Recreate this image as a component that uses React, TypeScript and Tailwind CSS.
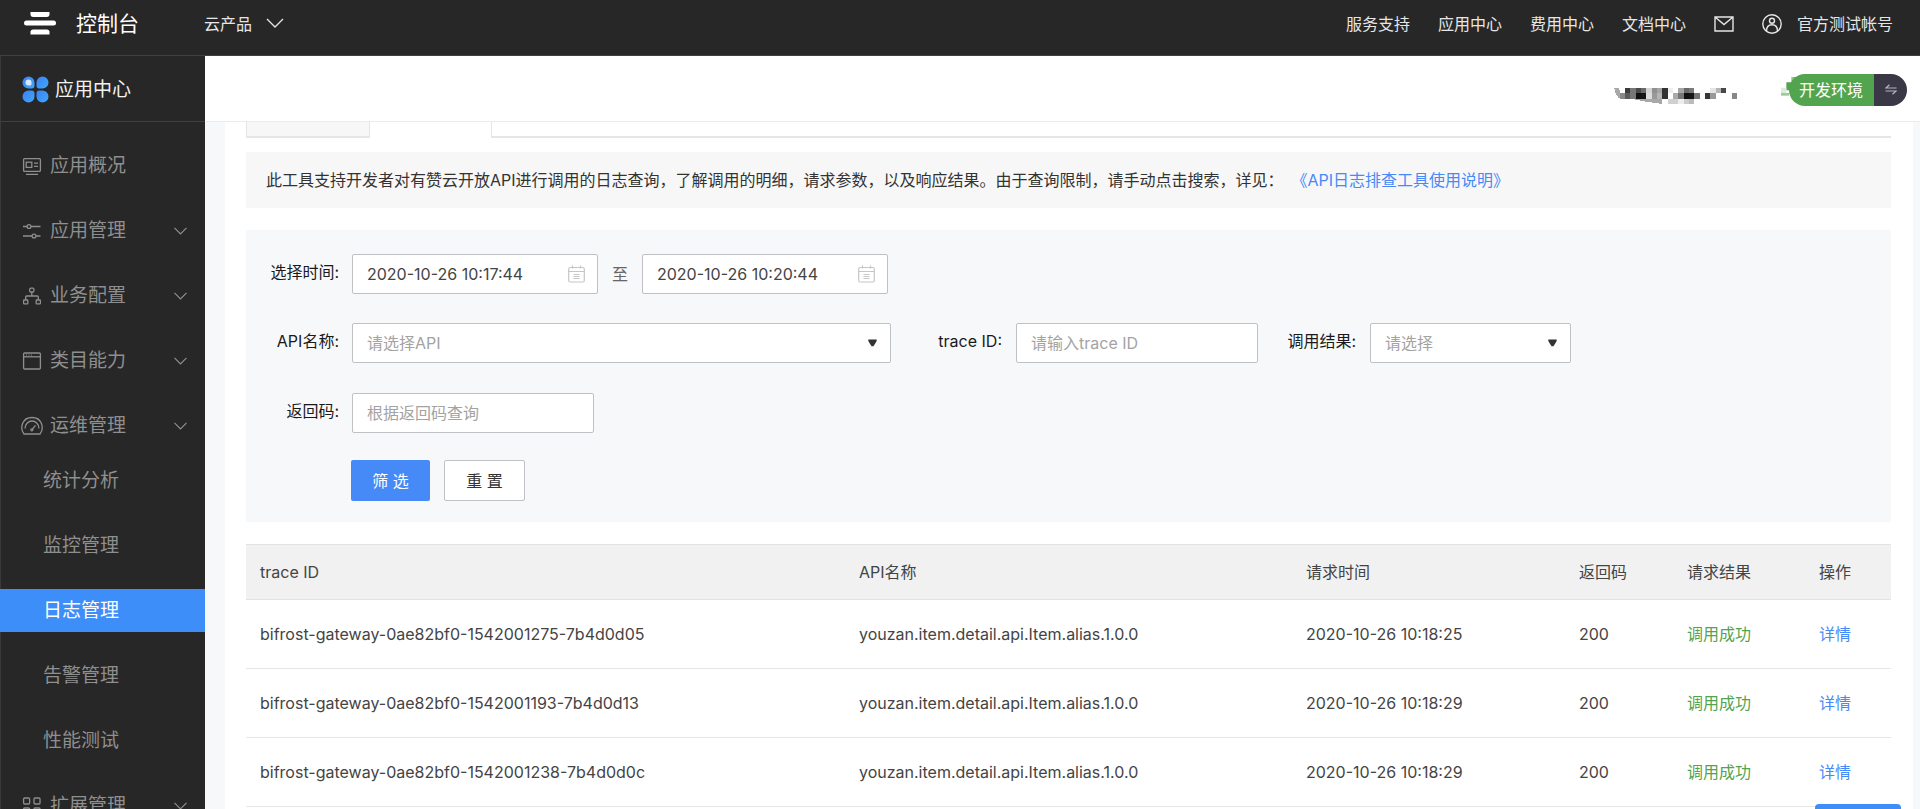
import type { ReactNode } from "react";

function Icon({ children }: { children: ReactNode }) {
  return (
    <svg width="22" height="20" viewBox="0 0 22 20" fill="none" stroke="currentColor" strokeWidth="1.3" aria-hidden="true">
      {children}
    </svg>
  );
}

const overviewIcon = (
  <Icon>
    <rect x="2.6" y="2.6" width="16.8" height="12.8" rx="1" />
    <rect x="5.2" y="6.2" width="5.6" height="5.2" />
    <path d="M13 7.2h4M13 10.4h4M5 18.4h12" />
  </Icon>
);
const slidersIcon = (
  <Icon>
    <path d="M2 5.5h4M10 5.5h9.5M2 15h9M15 15h4.5" />
    <circle cx="8" cy="5.5" r="1.9" />
    <circle cx="13" cy="15" r="1.9" />
  </Icon>
);
const treeIcon = (
  <Icon>
    <rect x="8.7" y="2.2" width="4.2" height="3.8" rx="1" />
    <rect x="2.6" y="14" width="4.2" height="3.8" rx="0.6" />
    <rect x="15.2" y="14" width="4.2" height="3.8" rx="0.6" />
    <path d="M10.8 6v4M4.7 14v-3q0-1 1-1h10.6q1 0 1 1v3" />
  </Icon>
);
const windowIcon = (
  <Icon>
    <rect x="2.6" y="2" width="16.8" height="16" rx="1" />
    <path d="M2.6 5.8h16.8" />
    <path d="M5 4h1M7.5 4h1M10 4h1" strokeWidth="1" />
  </Icon>
);
const gaugeIcon = (
  <Icon>
    <path d="M3 18C-1.5 12 1 1.5 11 1.5S23.5 12 19 18z" strokeLinejoin="round" />
    <path d="M4 12.5a7 7.5 0 0 1 14 0" />
    <circle cx="10.8" cy="13.8" r="1" />
    <path d="M11.5 13l3-3.6" />
  </Icon>
);
const gridIcon = (
  <Icon>
    <rect x="2.6" y="2" width="6" height="6" rx="1" />
    <rect x="13" y="2" width="6" height="6" rx="1" />
    <rect x="2.6" y="12" width="6" height="6" rx="1" />
    <rect x="13" y="12" width="6" height="6" rx="1" />
  </Icon>
);

type MenuEntry = { label: string; icon: ReactNode; expandable: boolean; children?: string[] };

const menu: MenuEntry[] = [
  { label: "应用概况", icon: overviewIcon, expandable: false },
  { label: "应用管理", icon: slidersIcon, expandable: true },
  { label: "业务配置", icon: treeIcon, expandable: true },
  { label: "类目能力", icon: windowIcon, expandable: true },
  {
    label: "运维管理",
    icon: gaugeIcon,
    expandable: true,
    children: ["统计分析", "监控管理", "日志管理", "告警管理", "性能测试"],
  },
  { label: "扩展管理", icon: gridIcon, expandable: true },
];

const activeChild = "日志管理";

const logs = [
  { trace: "bifrost-gateway-0ae82bf0-1542001275-7b4d0d05", time: "2020-10-26 10:18:25" },
  { trace: "bifrost-gateway-0ae82bf0-1542001193-7b4d0d13", time: "2020-10-26 10:18:29" },
  { trace: "bifrost-gateway-0ae82bf0-1542001238-7b4d0d0c", time: "2020-10-26 10:18:29" },
];

function TopBar() {
  return (
    <header className="flex h-14 shrink-0 items-center border-b border-[#404040] bg-[#272727] pr-[27px] pb-2 pl-6 text-base text-[#e6e6e6]">
      <svg width="32" height="23" viewBox="0 0 32 23" fill="#fff" aria-hidden="true">
        <path d="M6.5 0h19v3q-.6 2-2.5 2H9Q7 5 6.5 3z" />
        <rect y="8.5" width="32" height="5" rx="2.5" />
        <path d="M6.5 22.5h19v-3q-.6-2-2.5-2H9q-2 0-2.5 2z" />
      </svg>
      <span className="ml-5 text-[21px] text-white">控制台</span>
      <button type="button" className="ml-[65px] flex items-center gap-[14px]">
        云产品
        <svg width="18" height="11" viewBox="0 0 18 11" fill="none" stroke="currentColor" strokeWidth="1.3" aria-hidden="true">
          <path d="M1 1l8 8 8-8" />
        </svg>
      </button>
      <nav className="ml-auto flex items-center gap-7">
        <a href="#support">服务支持</a>
        <a href="#apps">应用中心</a>
        <a href="#billing">费用中心</a>
        <a href="#docs">文档中心</a>
        <a href="#messages" aria-label="消息">
          <svg width="20" height="16" viewBox="0 0 20 16" fill="none" stroke="currentColor" strokeWidth="1.4" aria-hidden="true">
            <path d="M1 1h18v14H1zM1 1l9 7.5L19 1" />
          </svg>
        </a>
        <a href="#account" className="flex items-center gap-[15px]">
          <svg width="20" height="20" viewBox="0 0 20 20" fill="none" stroke="currentColor" strokeWidth="1.4" aria-hidden="true">
            <circle cx="10" cy="10" r="9.2" />
            <circle cx="10" cy="6.7" r="2.5" />
            <path d="M4.5 17c0-4 2-6.3 5.5-6.3s5.5 2.3 5.5 6.3" />
          </svg>
          官方测试帐号
        </a>
      </nav>
    </header>
  );
}

function Sidebar() {
  return (
    <aside className="w-[205px] shrink-0 border-l border-[#3a3a3a] bg-[#272727] text-[19px] leading-7 text-[#8f8f8f]">
      <div className="flex h-[66px] items-center gap-[6px] border-b border-[#404040] pt-[2px] pl-[21px] text-[#f2f2f2]">
        <svg width="27" height="27" viewBox="0 0 27 27" aria-hidden="true">
          <defs>
            <linearGradient id="petal" x1="0" y1="0" x2="1" y2="1">
              <stop offset="0" stopColor="#3d7ff5" />
              <stop offset="1" stopColor="#3fa9f8" />
            </linearGradient>
          </defs>
          <g fill="url(#petal)">
            <path d="M6.5 0.5a6 6 0 0 1 6 6v3q0 3-3 3h-3a6 6 0 0 1 0-12z" />
            <path d="M20.5 0.5a6 6 0 0 1 0 12h-3.5q-2.5 0-2.5-3v-3a6 6 0 0 1 6-6z" />
            <path d="M6.5 26.5a6 6 0 0 1 0-12h3q3 0 3 3v3a6 6 0 0 1-6 6z" />
            <path d="M20.5 26.5a6 6 0 0 1-6-6v-3q0-3 2.5-3h3.5a6 6 0 0 1 0 12z" />
          </g>
          <path d="M6.5 3.5a3 3 0 0 1 3 3v1.5q0 1.5-1.5 1.5H6.5a3 3 0 0 1 0-6z" fill="#d6e8ff" />
        </svg>
        应用中心
      </div>
      <ul className="flex flex-col gap-[22px] pt-[22px]">
        {menu.map((item) => (
          <li key={item.label}>
            <a href="#menu" className="flex h-[43px] items-center gap-[7px] pr-[18px] pl-5">
              {item.icon}
              <span>{item.label}</span>
              {item.expandable && (
                <svg className="ml-auto" width="13" height="8" viewBox="0 0 13 8" fill="none" stroke="currentColor" strokeWidth="1.2" aria-hidden="true">
                  <path d="M0.5 0.8l6 6 6-6" />
                </svg>
              )}
            </a>
            {item.children && (
              <ul className="mt-3 flex flex-col gap-[22px]">
                {item.children.map((child) => (
                  <li key={child}>
                    <a
                      href="#submenu"
                      className={
                        child === activeChild
                          ? "-ml-px flex h-[43px] items-center bg-[#3d8ef9] pl-[43px] text-white"
                          : "flex h-[43px] items-center pl-[42px]"
                      }
                    >
                      {child}
                    </a>
                  </li>
                ))}
              </ul>
            )}
          </li>
        ))}
      </ul>
    </aside>
  );
}

/* Colour of each mosaic tile as [column, row, fill]. */
const tiles: [number, number, string][] = [
  [2, 0, "#3a3a3a"], [3, 0, "#777"], [4, 0, "#4a4a4a"], [5, 0, "#6a6a6a"], [6, 0, "#d5d5d5"], [7, 0, "#909090"],
  [8, 0, "#a5a5a5"], [9, 0, "#333"], [10, 0, "#eee"], [12, 0, "#a5a5a5"], [13, 0, "#6a6a6a"], [14, 0, "#7a7a7a"],
  [18, 0, "#e4e4e4"], [19, 0, "#b5b5b5"], [20, 0, "#484848"],
  [1, 1, "#888"], [2, 1, "#5a5a5a"], [3, 1, "#777"], [4, 1, "#111"], [5, 1, "#151515"], [6, 1, "#ddd"], [7, 1, "#999"],
  [8, 1, "#b5b5b5"], [9, 1, "#333"], [11, 1, "#aaa"], [12, 1, "#777"], [13, 1, "#111"], [14, 1, "#161616"],
  [15, 1, "#777"], [17, 1, "#383838"], [18, 1, "#999"], [22, 1, "#888"],
  [10, 2, "#d0d0d0"], [11, 2, "#d0d0d0"], [12, 2, "#eee"], [13, 2, "#ccc"], [14, 2, "#bbb"],
];

function PageHeader() {
  return (
    <div className="flex h-[66px] shrink-0 items-center justify-end border-b border-[#ebebeb] bg-white pt-[2px] pr-[13px]">
      <svg width="123" height="16" viewBox="0 0 368 48" className="mt-3" shapeRendering="crispEdges" aria-hidden="true">
        <path d="M0 0h14l5 18v14q-14-4-19-32z" fill="#a8a8a8" />
        <path d="M48 32h96v16L96 41z" fill="#a8a8a8" />
        {tiles.map(([col, row, fill]) => (
          <rect key={`${col}-${row}`} x={col * 16} y={row * 16} width="16" height="16" fill={fill} />
        ))}
      </svg>
      <div className="relative ml-[52px] flex h-8 text-base">
        <svg className="absolute top-[3px] -left-[8px]" width="16" height="20" viewBox="0 0 48 60" aria-hidden="true">
          <path d="M32 0h14v40H16V16h16z" fill="#52a44e" />
          <path d="M32 0h8v14h-8z" fill="#8cc388" />
          <path d="M0 32h16v16H0z" fill="#dbeeda" />
          <path d="M0 48h24v8H0z" fill="#9ccb99" />
        </svg>
        <span className="relative flex items-center rounded-l-full bg-[#52a44e] pr-[11px] pl-[10px] text-white">开发环境</span>
        <button type="button" aria-label="切换环境" className="flex w-[33px] items-center justify-center rounded-r-full bg-[#3a3846] text-[#b5b4bc]">
          <svg width="12" height="11" viewBox="0 0 12 11" fill="none" stroke="currentColor" strokeWidth="1.2" aria-hidden="true">
            <path d="M4.5 0.8L1 4h10.5M7.5 10.2L11 7H0.5" />
          </svg>
        </button>
      </div>
    </div>
  );
}

function DateField({ id, label, value }: { id: string; label: string; value: string }) {
  return (
    <div className="flex h-10 w-[246px] items-center rounded-xs border border-[#c0c1c4] bg-white pr-3 pl-[14px]">
      <input id={id} aria-label={label} defaultValue={value} className="min-w-0 flex-1 bg-transparent text-[#444] outline-none" />
      <svg width="17" height="18" viewBox="0 0 17 18" fill="none" stroke="#c6c6c6" strokeWidth="1.2" aria-hidden="true">
        <rect x="0.7" y="2.5" width="15.6" height="14.5" rx="1.5" />
        <path d="M0.7 6.5h15.6M4.5 0.5v3M12.5 0.5v3M5.5 9.5h6M5.5 11.5h6M5.5 13.5h6" />
      </svg>
    </div>
  );
}

function SelectField({ id, placeholder, width }: { id: string; placeholder: string; width: string }) {
  return (
    <div className={`relative ${width}`}>
      <select id={id} className="h-10 w-full appearance-none rounded-xs border border-[#c0c1c4] bg-white pr-10 pl-[14px] text-[#a3a3a3] outline-none">
        <option>{placeholder}</option>
      </select>
      <svg className="pointer-events-none absolute top-4 right-[14px]" width="9" height="8" viewBox="0 0 9 8" fill="#333" aria-hidden="true">
        <path d="M0.3 0.5h8.4v1.5L5.5 7.3h-2L0.3 2z" />
      </svg>
    </div>
  );
}

const textInput =
  "h-10 w-[242px] rounded-xs border border-[#c0c1c4] bg-white px-[14px] text-[#444] outline-none placeholder:text-[#a3a3a3]";
const fieldLabel = "w-[93px] pb-1 text-right text-[#1a1a1a]";
const inlineLabel = "pb-1 text-right text-[#1a1a1a]";

function Filters() {
  return (
    <form className="mt-[22px] flex flex-col bg-[#f7f8fa] pt-6 pb-[21px]">
      <div className="flex items-center">
        <label htmlFor="start" className={fieldLabel}>选择时间:</label>
        <div className="ml-[13px] flex items-center">
          <DateField id="start" label="开始时间" value="2020-10-26 10:17:44" />
          <span className="w-11 text-center text-[#666]">至</span>
          <DateField id="end" label="结束时间" value="2020-10-26 10:20:44" />
        </div>
      </div>
      <div className="mt-[29px] flex items-center">
        <label htmlFor="api" className={fieldLabel}>API名称:</label>
        <div className="ml-[13px] flex items-center">
          <SelectField id="api" placeholder="请选择API" width="w-[539px]" />
          <label htmlFor="trace" className={`w-[111px] ${inlineLabel}`}>trace ID:</label>
          <input id="trace" placeholder="请输入trace ID" className={`ml-[14px] ${textInput}`} />
          <label htmlFor="result" className={`w-[98px] ${inlineLabel}`}>调用结果:</label>
          <div className="ml-[14px]">
            <SelectField id="result" placeholder="请选择" width="w-[201px]" />
          </div>
        </div>
      </div>
      <div className="mt-[30px] flex items-center">
        <label htmlFor="code" className={fieldLabel}>返回码:</label>
        <input id="code" placeholder="根据返回码查询" className={`ml-[13px] ${textInput}`} />
      </div>
      <div className="mt-[27px] ml-[105px] flex gap-[14px]">
        <button type="button" className="h-[41px] w-[79px] rounded-xs bg-[#468af7] text-white">筛 选</button>
        <button type="button" className="h-[41px] w-[81px] rounded-xs border border-[#c0c1c4] bg-white text-[#333]">重 置</button>
      </div>
    </form>
  );
}

function LogTable() {
  return (
    <table className="mt-[22px] w-full table-fixed border-collapse text-left text-[#444]">
      <thead>
        <tr className="h-[55px] border-y border-[#e2e2e2] bg-[#f1f1f1]">
          <th className="pl-[14px] font-normal">trace ID</th>
          <th className="w-[447px] pl-[14px] font-normal">API名称</th>
          <th className="w-[273px] pl-[14px] font-normal">请求时间</th>
          <th className="w-[108px] pl-[14px] font-normal">返回码</th>
          <th className="w-[132px] pl-[14px] font-normal">请求结果</th>
          <th className="w-[86px] pl-[14px] font-normal">操作</th>
        </tr>
      </thead>
      <tbody>
        {logs.map((log) => (
          <tr key={log.trace} className="h-[69px] border-b border-[#e6e6e6]">
            <td className="pl-[14px]">{log.trace}</td>
            <td className="pl-[14px]">youzan.item.detail.api.Item.alias.1.0.0</td>
            <td className="pl-[14px]">{log.time}</td>
            <td className="pl-[14px]">200</td>
            <td className="pl-[14px] text-[#52a44e]">调用成功</td>
            <td className="pl-[14px]">
              <a href="#detail" className="text-[#468af7]">详情</a>
            </td>
          </tr>
        ))}
      </tbody>
    </table>
  );
}

export default function App() {
  return (
    <div className="flex h-screen flex-col overflow-hidden font-[Inter,'Noto_Sans_CJK_SC',sans-serif] text-base">
      <TopBar />
      <div className="flex min-h-0 flex-1">
        <Sidebar />
        <div className="flex min-w-0 flex-1 flex-col bg-[#f7f8fa]">
          <PageHeader />
          <main className="mr-[7px] ml-5 min-h-0 flex-1 overflow-hidden bg-white pr-[22px] pl-[21px]">
            <div className="flex h-4">
              <div className="w-[124px] border-x border-b-2 border-[#e6e6e6] bg-[#f7f7f7]" />
              <div className="w-[121px]" />
              <div className="flex-1 border-b-2 border-l border-[#e6e6e6]" />
            </div>
            <p className="mt-[14px] bg-[#f7f7f7] px-5 py-4 leading-6 text-[#333]">
              此工具支持开发者对有赞云开放API进行调用的日志查询，了解调用的明细，请求参数，以及响应结果。由于查询限制，请手动点击搜索，详见：
              <a href="#guide" className="ml-4 text-[#468af7]">《API日志排查工具使用说明》</a>
            </p>
            <Filters />
            <LogTable />
          </main>
        </div>
      </div>
      <button type="button" aria-label="帮助" className="fixed right-[19px] -bottom-8 h-[37px] w-[86px] rounded-sm bg-[#3d8ef9]" />
    </div>
  );
}
